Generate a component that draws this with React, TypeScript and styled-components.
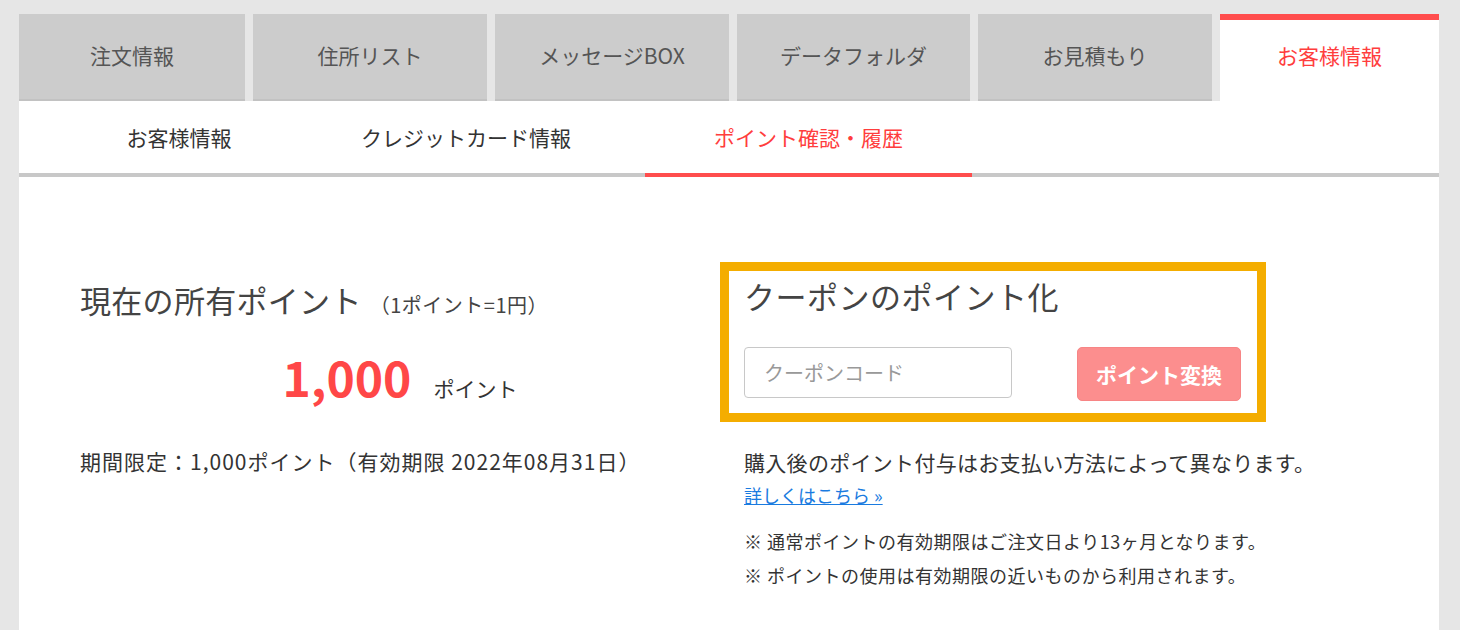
import React from "react";
import styled, { createGlobalStyle } from "styled-components";

const GlobalStyle = createGlobalStyle`
  body {
    margin: 0;
    background: #e6e6e6;
    font-family: "Noto Sans CJK JP", "Noto Sans", sans-serif;
    color: #333;
  }
`;

const Page = styled.div`
  display: flex;
  flex-direction: column;
  height: 630px;
  box-sizing: border-box;
  padding: 14px 21px 0 19px;
  overflow: hidden;
`;

const TabBar = styled.div`
  display: flex;
  gap: 8px;
`;

const Tab = styled.div<{ $w: number; $active?: boolean }>`
  width: ${(p) => p.$w}px;
  height: 87px;
  box-sizing: border-box;
  display: flex;
  align-items: center;
  justify-content: center;
  font-size: 21px;
  color: ${(p) => (p.$active ? "#ff3d3d" : "#555")};
  background: ${(p) => (p.$active ? "#fff" : "#cccccc")};
  border-top: 6px solid ${(p) => (p.$active ? "#ff4d4d" : "#cccccc")};
  box-shadow: ${(p) => (p.$active ? "none" : "inset 0 -2px 0 #c2c2c2")};
  padding-bottom: 11px;
`;

const SubNav = styled.div`
  display: flex;
  height: 72px;
  flex-shrink: 0;
  background: #fff;
  border-bottom: 4px solid #c8c8c8;
`;

const SubTab = styled.div<{ $w: number; $ml?: number; $active?: boolean }>`
  width: ${(p) => p.$w}px;
  margin-left: ${(p) => p.$ml ?? 0}px;
  margin-bottom: -4px;
  display: flex;
  align-items: center;
  justify-content: center;
  font-size: 21px;
  color: ${(p) => (p.$active ? "#ff3d3d" : "#333")};
  border-bottom: 4px solid ${(p) => (p.$active ? "#ff4d4d" : "transparent")};
`;

const Content = styled.div`
  flex: 1;
  display: flex;
  background: #fff;
  padding: 85px 0 0 61px;
`;

const LeftCol = styled.div`
  width: 640px;
  padding-top: 16px;
`;

const Title = styled.div`
  font-size: 31px;
  line-height: 44px;
  color: #444;
  letter-spacing: 0.3px;
`;

const TitleNote = styled.span`
  font-size: 20px;
  margin-left: 8px;
  letter-spacing: 0.5px;
`;

const PointsRow = styled.div`
  display: flex;
  justify-content: center;
  align-items: baseline;
  gap: 22px;
  margin-top: 19px;
  line-height: 60px;
`;

const PointsValue = styled.span`
  font-size: 48px;
  font-weight: 700;
  color: #ff4747;
`;

const PointsUnit = styled.span`
  font-size: 21px;
  color: #333;
`;

const Limited = styled.div`
  margin-top: 28px;
  font-size: 21px;
  line-height: 30px;
  letter-spacing: 1px;
`;

const RightCol = styled.div`
  width: 546px;
`;

const CouponBox = styled.div`
  border: 9px solid #f4ad00;
  padding: 5px 16px 12px 15px;
`;

const CouponTitle = styled.div`
  font-size: 31px;
  line-height: 40px;
  color: #444;
  letter-spacing: 0.5px;
`;

const CouponRow = styled.div`
  display: flex;
  justify-content: space-between;
  align-items: flex-start;
  margin-top: 31px;
`;

const CodeInput = styled.input`
  width: 268px;
  height: 51px;
  box-sizing: border-box;
  border: 1px solid #c8c8c8;
  border-radius: 4px;
  padding: 0 19px;
  font-family: inherit;
  font-size: 20px;
  color: #333;
  outline: none;
  &::placeholder {
    color: #999;
  }
`;

const ConvertButton = styled.button`
  width: 164px;
  height: 54px;
  border: 1px solid #f78585;
  border-radius: 5px;
  background: #fc8e8e;
  color: #fff;
  font-family: inherit;
  font-size: 21px;
  font-weight: 700;
  cursor: pointer;
`;

const Notice = styled.div`
  padding-left: 24px;
  margin-top: 24px;
  white-space: nowrap;
`;

const Lead = styled.p`
  margin: 0;
  font-size: 21px;
  line-height: 32px;
  letter-spacing: 0.3px;
`;

const MoreLink = styled.a`
  display: inline-block;
  margin-top: 2px;
  font-size: 18px;
  line-height: 30px;
  color: #1a7be0;
  text-decoration: underline;
`;

const NoteList = styled.div`
  margin-top: 14px;
`;

const Note = styled.p`
  margin: 0;
  font-size: 18px;
  line-height: 34px;
  letter-spacing: 0.5px;
`;

const mainTabs = [
  { label: "注文情報", w: 226 },
  { label: "住所リスト", w: 234 },
  { label: "メッセージBOX", w: 234 },
  { label: "データフォルダ", w: 233 },
  { label: "お見積もり", w: 234 },
  { label: "お客様情報", w: 219, active: true },
];

const subTabs = [
  { label: "お客様情報", w: 320 },
  { label: "クレジットカード情報", w: 254 },
  { label: "ポイント確認・履歴", w: 327, ml: 52, active: true },
];

const App = () => {
  return (
    <Page>
      <GlobalStyle />
      <TabBar>
        {mainTabs.map((t) => (
          <Tab key={t.label} $w={t.w} $active={t.active}>
            {t.label}
          </Tab>
        ))}
      </TabBar>
      <SubNav>
        {subTabs.map((t) => (
          <SubTab key={t.label} $w={t.w} $ml={t.ml} $active={t.active}>
            {t.label}
          </SubTab>
        ))}
      </SubNav>
      <Content>
        <LeftCol>
          <Title>
            現在の所有ポイント<TitleNote>（1ポイント=1円）</TitleNote>
          </Title>
          <PointsRow>
            <PointsValue>1,000</PointsValue>
            <PointsUnit>ポイント</PointsUnit>
          </PointsRow>
          <Limited>期間限定：1,000ポイント（有効期限 2022年08月31日）</Limited>
        </LeftCol>
        <RightCol>
          <CouponBox>
            <CouponTitle>クーポンのポイント化</CouponTitle>
            <CouponRow>
              <CodeInput placeholder="クーポンコード" />
              <ConvertButton>ポイント変換</ConvertButton>
            </CouponRow>
          </CouponBox>
          <Notice>
            <Lead>購入後のポイント付与はお支払い方法によって異なります。</Lead>
            <MoreLink href="#">詳しくはこちら »</MoreLink>
            <NoteList>
              <Note>※ 通常ポイントの有効期限はご注文日より13ヶ月となります。</Note>
              <Note>※ ポイントの使用は有効期限の近いものから利用されます。</Note>
            </NoteList>
          </Notice>
        </RightCol>
      </Content>
    </Page>
  );
};

export default App;
